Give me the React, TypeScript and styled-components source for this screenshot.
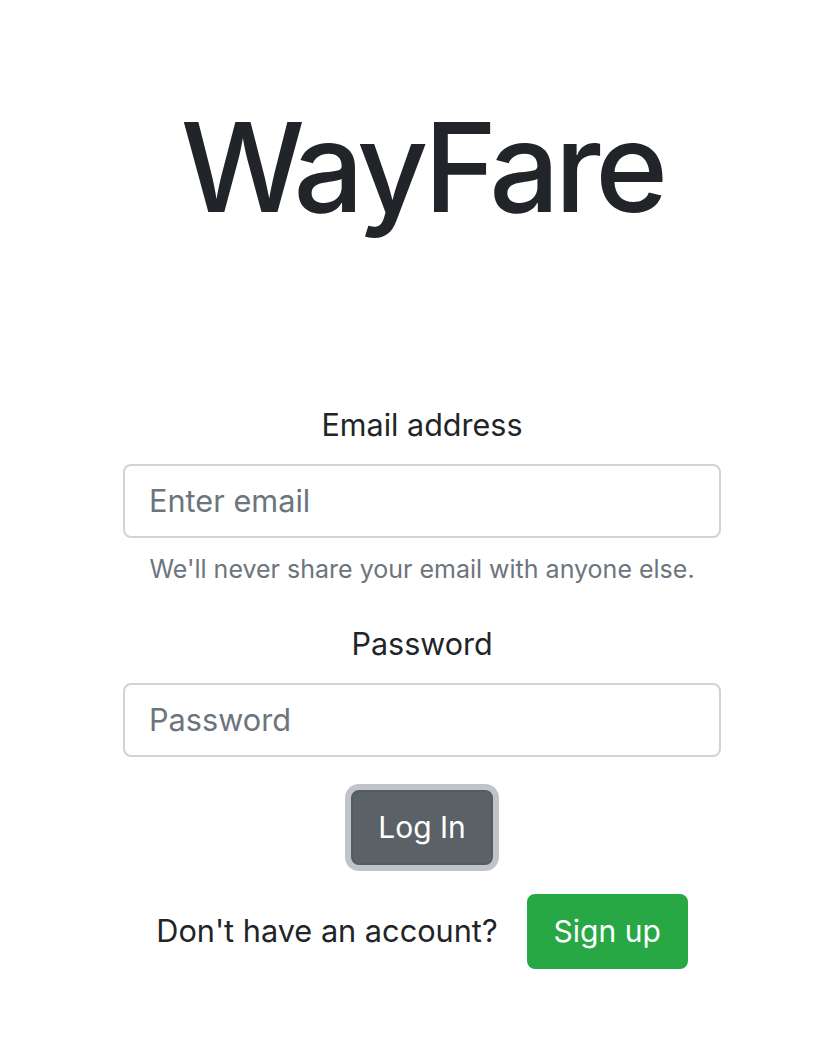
import React, { FC } from "react";
import styled, { createGlobalStyle } from "styled-components";

const colors = {
  dark: "#212529",
  muted: "#6c757d",
  border: "#ced4da",
  secondary: "#5a6268",
  secondaryBorder: "#545b62",
  ring: "rgba(130, 138, 145, 0.5)",
  success: "#28a745",
  white: "#ffffff",
};

const GlobalStyle = createGlobalStyle`
  body {
    margin: 0;
    background: ${colors.white};
    font-family: Inter, "Noto Sans", sans-serif;
    color: ${colors.dark};
  }
`;

const Page = styled.div`
  display: flex;
  flex-direction: column;
  align-items: center;
  padding-left: 4px;
`;

const Title = styled.h1`
  margin: 93px 0 0;
  font-size: 124px;
  font-weight: 500;
  line-height: 1.2;
  letter-spacing: -5px;
  color: ${colors.dark};
`;

const Form = styled.form`
  width: 598px;
  margin-top: 160px;
  display: flex;
  flex-direction: column;
  align-items: center;
`;

const Group = styled.div`
  width: 100%;
  display: flex;
  flex-direction: column;
  align-items: center;
  margin-bottom: 33px;
`;

const Label = styled.label`
  font-size: 30.5px;
  line-height: 1.5;
  margin-bottom: 16px;
`;

const Input = styled.input`
  box-sizing: border-box;
  width: 100%;
  height: 74px;
  padding: 0 24px;
  border: 2px solid ${colors.border};
  border-radius: 8px;
  font-family: inherit;
  font-size: 30.7px;
  color: ${colors.dark};
  outline: none;

  &::placeholder {
    color: ${colors.muted};
  }
`;

const Help = styled.small`
  margin-top: 13px;
  font-size: 25px;
  line-height: 1.5;
  color: ${colors.muted};
`;

const Button = styled.button<{ $bg: string; $border: string; $focused?: boolean }>`
  height: 75px;
  padding: 0 25px;
  border: 2px solid ${(p) => p.$border};
  border-radius: 8px;
  background: ${(p) => p.$bg};
  color: ${colors.white};
  font-family: inherit;
  font-size: 30px;
  line-height: 1.5;
  box-shadow: ${(p) => (p.$focused ? `0 0 0 6px ${colors.ring}` : "none")};
`;

const SignupRow = styled.div`
  display: flex;
  align-items: center;
  gap: 29px;
  margin-top: 29px;
`;

const Prompt = styled.span`
  font-size: 30.7px;
  line-height: 1.5;
`;

const App: FC = () => {
  return (
    <>
      <GlobalStyle />
      <Page>
        <Title>WayFare</Title>
        <Form onSubmit={(e) => e.preventDefault()}>
          <Group>
            <Label htmlFor="email">Email address</Label>
            <Input id="email" type="email" placeholder="Enter email" />
            <Help>We'll never share your email with anyone else.</Help>
          </Group>
          <Group>
            <Label htmlFor="password">Password</Label>
            <Input id="password" type="password" placeholder="Password" />
          </Group>
          <Button
            type="submit"
            $bg={colors.secondary}
            $border={colors.secondaryBorder}
            $focused
          >
            Log In
          </Button>
        </Form>
        <SignupRow>
          <Prompt>Don't have an account?</Prompt>
          <Button type="button" $bg={colors.success} $border={colors.success}>
            Sign up
          </Button>
        </SignupRow>
      </Page>
    </>
  );
};

export default App;
